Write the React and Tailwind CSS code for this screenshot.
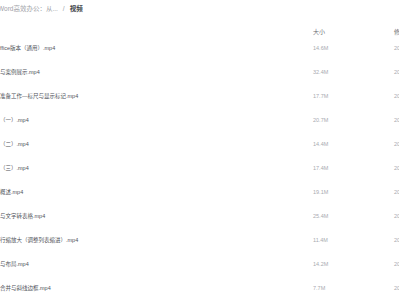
const files = [
  { name: 'ffice版本（通用）.mp4', size: '14.6M' },
  { name: '与案例展示.mp4', size: '32.4M' },
  { name: '准备工作—标尺与显示标记.mp4', size: '17.7M' },
  { name: '（一）.mp4', size: '20.7M' },
  { name: '（二）.mp4', size: '14.4M' },
  { name: '（三）.mp4', size: '17.4M' },
  { name: '概述.mp4', size: '19.1M' },
  { name: '与文字转表格.mp4', size: '25.4M' },
  { name: '行缩放大（调整列表缩进）.mp4', size: '11.4M' },
  { name: '与布局.mp4', size: '14.2M' },
  { name: '合并与斜线边框.mp4', size: '7.7M' },
]

export default function App() {
  return (
    <div className="w-[399px] h-[300px] overflow-hidden bg-white font-['Liberation_Sans','Noto_Sans_CJK_SC',sans-serif] leading-none">
      {/* Breadcrumb */}
      <div className="h-[18px] flex items-center whitespace-nowrap text-[6.5px] -ml-[2px]">
        <span className="text-[#a0a2a8]">Word高效办公：从...</span>
        <span className="text-[#a0a2a8] mx-[5px]">/</span>
        <span className="text-[#3a3d45] font-bold">视频</span>
      </div>

      {/* Header */}
      <div className="mt-[9px] h-[10px] grid grid-cols-[313px_81px_1fr] items-center whitespace-nowrap text-[6px]">
        <div />
        <div className="text-[#6b6e75]">大小</div>
        <div className="text-[#6b6e75]">修改时间</div>
      </div>

      {/* Rows */}
      <div>
        {files.map((f, i) => (
          <div
            key={i}
            className="h-[24px] grid grid-cols-[313px_81px_1fr] items-center whitespace-nowrap text-[5.5px]"
          >
            <div className="text-[#50535a]">{f.name}</div>
            <div className="text-[#a8aab0]">{f.size}</div>
            <div className="text-[#a8aab0]">2021-03-15</div>
          </div>
        ))}
      </div>
    </div>
  )
}
